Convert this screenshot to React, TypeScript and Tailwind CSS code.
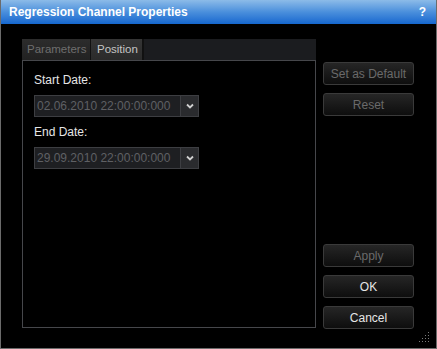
import { ReactNode } from 'react'

const DateBox = ({ value }: { value: string }) => (
    <div className="flex h-[22px] w-[165px] border border-[#3d3e42] bg-[#1e1f22]">
        <div className="flex-1 flex items-center pl-[2px] text-[12px] text-[#5f6064] leading-none">{value}</div>
        <div className="w-[18px] flex items-center justify-center border-l border-[#3d3e42] bg-[#2a2b2e]">
            <svg width="8" height="6" viewBox="0 0 8 6">
                <path d="M1 1.5 L4 4.5 L7 1.5" stroke="#d0d0d0" strokeWidth="1.8" fill="none" />
            </svg>
        </div>
    </div>
)

const Btn = ({ children, disabled, className = '' }: { children: ReactNode; disabled?: boolean; className?: string }) => (
    <div
        className={`h-[23px] w-[91px] flex items-center justify-center rounded-[3px] border border-[#3a3a3a] bg-gradient-to-b from-[#262626] to-[#0e0e0e] text-[12px] ${
            disabled ? 'text-[#6a6a6a]' : 'text-[#e6e6e6]'
        } ${className}`}
    >
        {children}
    </div>
)

export default function App() {
    return (
        <div className="relative w-[437px] h-[349px] bg-black flex flex-col font-['Liberation_Sans',Arial,sans-serif] select-none">
            <div className="h-[24px] shrink-0 flex items-center justify-between pl-[8px] pr-[10px] bg-gradient-to-b from-[#8cbbe8] via-[#4a8fdc] to-[#1467cf] border-x border-[#6b6b6b] text-white font-bold text-[12px]">
                <span>Regression Channel Properties</span>
                <span>?</span>
            </div>
            <div className="flex-1 flex border-x border-b border-[#6b6b6b] pt-[15px] pl-[21px]">
                <div className="w-[294px] h-[289px] flex flex-col">
                    <div className="h-[21px] flex shrink-0">
                        <div className="w-[69px] flex items-center pl-[5px] bg-gradient-to-b from-[#2c2c2c] to-[#222] text-[11.5px] text-[#6e6e6e] border-r border-[#111]">
                            Parameters
                        </div>
                        <div className="w-[53px] flex items-center pl-[6px] bg-gradient-to-b from-[#353535] to-[#2b2b2b] text-[11.5px] text-[#c4c4c4] border-r-2 border-[#111]">
                            Position
                        </div>
                        <div className="flex-1 bg-[#1b1c1f]" />
                    </div>
                    <div className="flex-1 border border-[#46474b] pt-[12px] pl-[11px] text-[12px] text-[#e6e6e6]">
                        <div className="leading-[14px]">Start Date:</div>
                        <div className="mt-[8px]">
                            <DateBox value="02.06.2010 22:00:00:000" />
                        </div>
                        <div className="mt-[8px] leading-[14px]">End Date:</div>
                        <div className="mt-[8px]">
                            <DateBox value="29.09.2010 22:00:00:000" />
                        </div>
                    </div>
                </div>
                <div className="ml-[7px] pt-[23px] h-[290px] flex flex-col gap-[8px]">
                    <Btn disabled>Set as Default</Btn>
                    <Btn disabled>Reset</Btn>
                    <div className="flex-1" />
                    <Btn disabled>Apply</Btn>
                    <Btn>OK</Btn>
                    <Btn>Cancel</Btn>
                </div>
            </div>
            <svg className="absolute right-[6px] bottom-[5px]" width="12" height="12" viewBox="0 0 12 12">
                {[
                    [9, 0],
                    [6, 3],
                    [9, 3],
                    [3, 6],
                    [6, 6],
                    [9, 6],
                    [0, 9],
                    [3, 9],
                    [6, 9],
                    [9, 9]
                ].map(([x, y], i) => (
                    <rect key={i} x={x} y={y} width="1" height="1" fill="#7a7a7a" />
                ))}
            </svg>
        </div>
    )
}
